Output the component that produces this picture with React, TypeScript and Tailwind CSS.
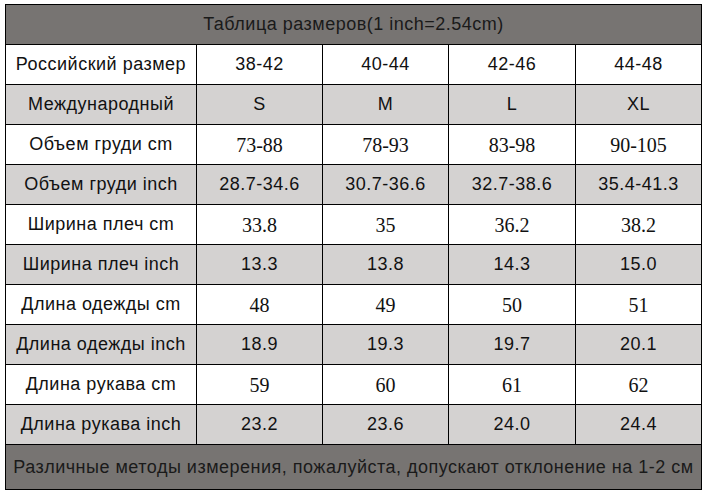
const rows: { label: string; values: string[]; gray: boolean; serif: boolean }[] = [
  { label: 'Российский размер', values: ['38-42', '40-44', '42-46', '44-48'], gray: false, serif: false },
  { label: 'Международный', values: ['S', 'M', 'L', 'XL'], gray: true, serif: false },
  { label: 'Объем груди cm', values: ['73-88', '78-93', '83-98', '90-105'], gray: false, serif: true },
  { label: 'Объем груди inch', values: ['28.7-34.6', '30.7-36.6', '32.7-38.6', '35.4-41.3'], gray: true, serif: false },
  { label: 'Ширина плеч cm', values: ['33.8', '35', '36.2', '38.2'], gray: false, serif: true },
  { label: 'Ширина плеч inch', values: ['13.3', '13.8', '14.3', '15.0'], gray: true, serif: false },
  { label: 'Длина одежды cm', values: ['48', '49', '50', '51'], gray: false, serif: true },
  { label: 'Длина одежды inch', values: ['18.9', '19.3', '19.7', '20.1'], gray: true, serif: false },
  { label: 'Длина рукава cm', values: ['59', '60', '61', '62'], gray: false, serif: true },
  { label: 'Длина рукава inch', values: ['23.2', '23.6', '24.0', '24.4'], gray: true, serif: false },
]

const serifCell = 'border border-black text-center align-middle font-[Liberation_Serif] text-[20px] tracking-normal'
const sansCell = 'border border-black text-center align-middle'

export default function App() {
  return (
    <div className="w-[706px] h-[494px] bg-white pl-[5px] pt-[4px] font-[Liberation_Sans] text-[18px] tracking-[0.5px] text-[#111]">
      <table className="border-collapse table-fixed w-[696px]">
        <colgroup>
          <col className="w-[191px]" />
          <col className="w-[126px]" />
          <col className="w-[126px]" />
          <col className="w-[127px]" />
          <col className="w-[126px]" />
        </colgroup>
        <tbody>
          <tr className="h-[40px] bg-[#777472]">
            <td colSpan={5} className="border border-black text-center align-middle text-[#1a1a1a]">
              Таблица размеров(1 inch=2.54cm)
            </td>
          </tr>
          {rows.map(r => (
            <tr key={r.label} className={r.gray ? 'h-[40px] bg-[#d4d2d1]' : 'h-[40px] bg-white'}>
              <td className="border border-black text-center align-middle whitespace-nowrap">{r.label}</td>
              {r.values.map((v, i) => (
                <td key={i} className={r.serif ? serifCell : sansCell}>
                  {v}
                </td>
              ))}
            </tr>
          ))}
          <tr className="h-[45px] bg-[#777472]">
            <td colSpan={5} className="border border-black text-center align-middle text-[#1a1a1a] whitespace-nowrap">
              Различные методы измерения, пожалуйста, допускают отклонение на 1-2 см
            </td>
          </tr>
        </tbody>
      </table>
    </div>
  )
}
